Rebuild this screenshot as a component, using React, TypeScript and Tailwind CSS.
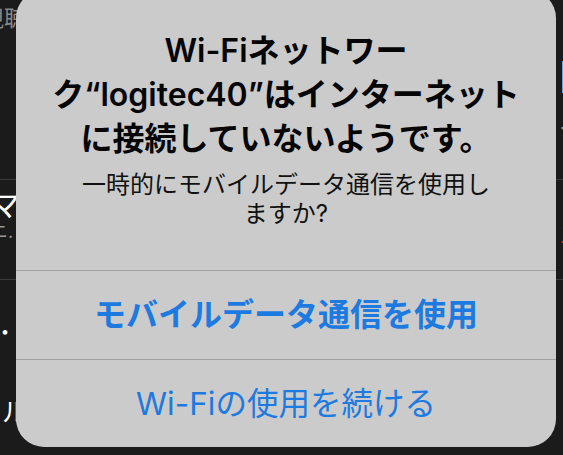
import React from "react";

const jp = "font-['Inter','Noto_Sans_CJK_JP',sans-serif]";

const Alert: React.FC = () => {
  return (
    <div className="absolute left-[16px] right-[7px] top-[-10px] bottom-[8px] rounded-[28px] bg-[#cbcbcb] flex flex-col overflow-hidden">
      {/* title + message */}
      <div className="h-[280px] flex flex-col items-center pt-[39px] text-center">
        <h1 className="text-[32px] leading-[44px] font-semibold text-[#050505]">
          Wi-Fiネットワー
          <br />
          ク“logitec40”はインターネット
          <br />
          に接続していないようです。
        </h1>
        <p className="mt-[9px] text-[24px] leading-[29px] text-[#111]">
          一時的にモバイルデータ通信を使用し
          <br />
          ますか?
        </p>
      </div>
      <button className="h-[89px] border-t border-[#a2a2a2] flex items-center justify-center text-[32px] font-semibold text-[#1d7ae0]">
        モバイルデータ通信を使用
      </button>
      <button className="flex-1 border-t border-[#a2a2a2] flex items-center justify-center text-[31.5px] text-[#1d7ae0]">
        Wi-Fiの使用を続ける
      </button>
    </div>
  );
};

export default function App() {
  return (
    <div className={`relative w-[563px] h-[455px] overflow-hidden bg-[#1b1b1b] ${jp}`}>
      {/* list behind the alert */}
      <div className="flex flex-col h-full">
        <div className="h-[180px] border-b border-[#3a3a3a] flex justify-between">
          <span className="ml-[-18px] mt-[2px] text-[22px] text-[#8a8a8a]">視聴</span>
          <div className="flex flex-col items-end mr-[-8px] mt-[52px]">
            <span className="text-[44px] leading-[50px] font-semibold text-white">l</span>
            <span className="mt-[12px] text-[24px] leading-[28px] text-[#9a9a9a] mr-[-12px]">イ</span>
          </div>
        </div>
        <div className="h-[100px] border-b border-[#3a3a3a] flex justify-between">
          <div className="flex flex-col ml-[-10px] mt-[8px]">
            <span className="text-[30px] leading-[34px] text-white">マ</span>
            <span className="text-[18px] leading-[20px] text-[#9a9a9a]">ニ.</span>
          </div>
          <span className="mr-[-18px] mt-[38px] text-[22px] text-[#d0453f]">ス</span>
        </div>
        <div className="flex-1 flex flex-col">
          <span className="ml-[-6px] mt-[36px] text-[22px] text-white">・</span>
          <span className="ml-[-24px] mt-[44px] text-[26px] text-white">カル</span>
        </div>
      </div>
      <Alert />
    </div>
  );
}
